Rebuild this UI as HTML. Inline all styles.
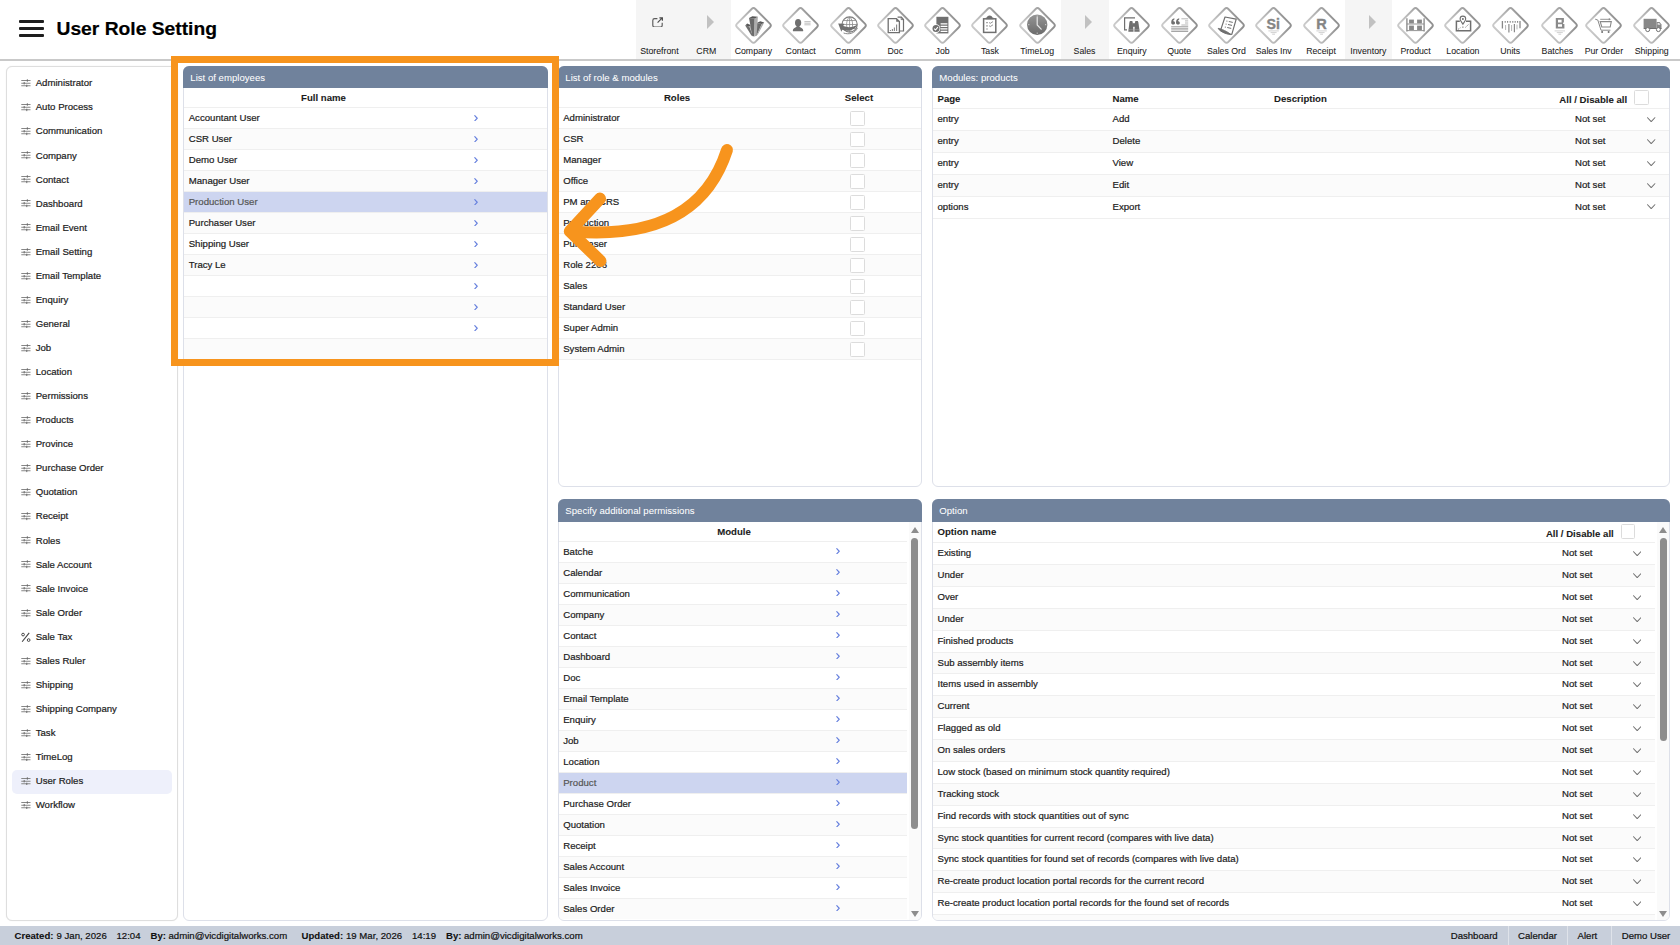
<!DOCTYPE html><html><head><meta charset="utf-8"><title>User Role Setting</title><style>
*{box-sizing:border-box;margin:0;padding:0}
html,body{width:1680px;height:945px;overflow:hidden;background:#fff}
body{font-family:"Liberation Sans",sans-serif;font-size:9.625px;color:#1c1c1c;position:relative;-webkit-text-stroke:0.2px}
.abs{position:absolute}
#hdr{left:0;top:0;width:1680px;height:61px;background:#fff}
#hdrline{left:0;top:59px;width:1680px;height:2px;background:#c9c9c9}
.hb{left:18.7px;width:25px;height:2.6px;background:#1e1e1e;border-radius:1px}
#title{left:56.5px;top:16.9px;font-size:19.25px;font-weight:bold;color:#000;line-height:24px;white-space:nowrap}
.tlab{-webkit-text-stroke:0.05px;width:80px;top:45.8px;text-align:center;font-size:8.75px;line-height:10px;color:#1a1a1a;white-space:nowrap}
.tico{top:6.9px;width:37px;height:37px}
.tri{top:15.3px;width:0;height:0;border-left:7.5px solid #c1c1c1;border-top:7.1px solid transparent;border-bottom:7.1px solid transparent}
#side{left:6px;top:66px;width:172px;height:855px;border:1px solid #dedede;border-radius:6px;background:#fff;box-shadow:0 0 1px #e2e2e2}
.si{left:0;width:171px;height:24px;line-height:24px;white-space:nowrap}
.si svg{position:absolute;left:14px;top:7.8px;width:9.8px;height:8.4px}
.si span{position:absolute;left:28.7px;top:0}
#sel{left:4.6px;top:702.8px;width:160.2px;height:24px;background:#eef0fb;border-radius:5px}
.panel{border:1px solid #dde0e9;border-radius:6px;background:#fff}
.pb{position:absolute;left:0;top:0;right:0;bottom:0;overflow:hidden;border-radius:5px}
.ph{position:absolute;left:-1px;right:-1px;top:-1px;height:22.4px;background:#70829c;color:#fff;line-height:22px;padding-left:7.3px;white-space:nowrap;border-radius:6px 6px 0 0;-webkit-text-stroke:0.04px}
.row{position:absolute;left:0;right:0;border-top:1px solid #efefef;white-space:nowrap}
.row.alt{background:#fbfbfb}
.row.sel{background:#cdd5f0;color:#555}
.row span{position:absolute;top:0}
.b{font-weight:bold;-webkit-text-stroke:0.08px}
.chev{position:absolute;width:4px;height:6.5px}
.cb{position:absolute;width:14.5px;height:14.5px;border:1px solid #dcdcdc;border-radius:1.5px;background:#fff}
.dn{position:absolute;width:8.4px;height:5.6px}
.sbt{position:absolute;background:#fafafa}
.thumb{position:absolute;width:7.6px;background:#8d8d8d;border-radius:4px}
.aup{position:absolute;width:0;height:0;border-left:4px solid transparent;border-right:4px solid transparent;border-bottom:6px solid #8d8d8d}
.adn{position:absolute;width:0;height:0;border-left:4px solid transparent;border-right:4px solid transparent;border-top:6px solid #8d8d8d}
#status{left:0;top:926px;width:1680px;height:19px;background:#c8cfdb;line-height:20px;white-space:nowrap;color:#111}
#status span{position:absolute;top:0}
.sep{position:absolute;top:0;width:1px;height:19px;background:#dfe3ea}
#obox{left:171px;top:56px;width:388px;height:310px;border:7px solid #f7941d}
</style></head><body>
<div id="hdr" class="abs"></div>
<div class="abs hb" style="top:20.1px"></div>
<div class="abs hb" style="top:27.2px"></div>
<div class="abs hb" style="top:34.1px"></div>
<div id="title" class="abs">User Role Setting</div>
<div class="abs" style="left:636.3px;top:0;width:94.4px;height:59px;background:#f5f5f5"></div>
<div class="abs" style="left:1061.1px;top:0;width:47.6px;height:59px;background:#f5f5f5"></div>
<div class="abs" style="left:1344.9px;top:0;width:46.9px;height:59px;background:#f5f5f5"></div>
<svg style="position:absolute;left:651.9px;top:16.6px;width:11.6px;height:10.8px" viewBox="0 0 11.6 10.8"><path d="M5.4 1.6 H2.6 C1.5 1.6 0.8 2.3 0.8 3.4 V8.2 C0.8 9.3 1.5 10 2.6 10 H8.4 C9.5 10 10.2 9.3 10.2 8.2 V5.8" fill="none" stroke="#5a5a5a" stroke-width="1.15"/><path d="M5.6 5.6 L10 1.2 M7.4 0.8 H10.4 V3.8" fill="none" stroke="#4a4a4a" stroke-width="1.15"/></svg>
<div class="abs tlab" style="left:619.40px">Storefront</div>
<div class="abs tri" style="left:707.0px"></div>
<div class="abs tlab" style="left:666.30px">CRM</div>
<svg class="abs tico" style="left:734.90px" viewBox="0 0 37 37"><defs><linearGradient id="dg" x1="0.75" y1="0" x2="0.25" y2="1"><stop offset="0" stop-color="#909090"/><stop offset="0.5" stop-color="#b0b0b0"/><stop offset="1" stop-color="#c9c9c9"/></linearGradient></defs><rect x="-12.9" y="-12.9" width="25.8" height="25.8" rx="2.6" transform="translate(18.5 18.4) rotate(45)" fill="#fff" stroke="url(#dg)" stroke-width="1.9"/><path d="M10.2 18.5 L14.4 19.6 L18 29.3 L16.4 28.6 Z" fill="#6e6e6e"/><path d="M14.4 19.6 L15.6 17.9 L18.4 24 L18 29.3 Z" fill="#b4b4b4"/><path d="M10.2 18.5 L12.2 16.6 L15.6 17.9 L14.4 19.6 Z" fill="#585858"/><path d="M21.6 15.9 L26.8 17.1 L21.6 28.6 L20.2 29.2 Z" fill="#6c6c6c"/><path d="M26.8 17.1 L29.2 15.6 L22.8 27.6 L21.6 28.6 Z" fill="#a6a6a6"/><path d="M21.6 15.9 L25.4 14.2 L29.2 15.6 L26.8 17.1 Z" fill="#585858"/><path d="M14 10.9 L19.7 11.6 L19.4 29.5 L17.3 28.9 Z" fill="#6a6a6a"/><path d="M19.7 11.6 L22.9 9.8 L21.6 28.3 L19.4 29.5 Z" fill="#adadad"/><path d="M14 10.9 L17.4 9.2 L22.9 9.8 L19.7 11.6 Z" fill="#565656"/></svg>
<div class="abs tlab" style="left:713.40px">Company</div>
<svg class="abs tico" style="left:782.20px" viewBox="0 0 37 37"><defs><linearGradient id="dg" x1="0.75" y1="0" x2="0.25" y2="1"><stop offset="0" stop-color="#909090"/><stop offset="0.5" stop-color="#b0b0b0"/><stop offset="1" stop-color="#c9c9c9"/></linearGradient></defs><rect x="-12.9" y="-12.9" width="25.8" height="25.8" rx="2.6" transform="translate(18.5 18.4) rotate(45)" fill="#fff" stroke="url(#dg)" stroke-width="1.9"/><ellipse cx="16.1" cy="15.8" rx="3.1" ry="3.8" fill="#6f6f6f"/><path d="M10.8 24 C10.8 21.4 13 20.6 14.6 19.8 L17.4 19.8 C19 20.6 21.3 21.4 21.3 24 C21.3 24.4 10.8 24.4 10.8 24 Z" fill="#6f6f6f"/><rect x="14.6" y="17.8" width="2.8" height="3" fill="#6f6f6f"/><path d="M22.4 14.6 H28.6 M22.4 16.2 H28.6 M22.4 17.8 H28.6" stroke="#b9b9b9" stroke-width="0.9"/></svg>
<div class="abs tlab" style="left:760.70px">Contact</div>
<svg class="abs tico" style="left:829.50px" viewBox="0 0 37 37"><defs><linearGradient id="dg" x1="0.75" y1="0" x2="0.25" y2="1"><stop offset="0" stop-color="#909090"/><stop offset="0.5" stop-color="#b0b0b0"/><stop offset="1" stop-color="#c9c9c9"/></linearGradient></defs><rect x="-12.9" y="-12.9" width="25.8" height="25.8" rx="2.6" transform="translate(18.5 18.4) rotate(45)" fill="#fff" stroke="url(#dg)" stroke-width="1.9"/><circle cx="19.6" cy="17.5" r="7.6" fill="#fff" stroke="#7c7c7c" stroke-width="1.2"/><path d="M12.2 17.5 H27 M13.6 13.5 H25.6 M13.6 21.5 H25.6 M19.6 10 V25 M19.6 10 C15.6 13 15.6 22 19.6 25 M19.6 10 C23.6 13 23.6 22 19.6 25" fill="none" stroke="#888" stroke-width="0.8"/><path d="M8.2 16.6 L14.4 16.8 L13.3 19 C17.8 20.9 23.2 20.5 27.2 17.6 C26 22.4 19.4 25.2 12.3 22.8 L11.3 24.8 Z" fill="#6f6f6f"/><path d="M13.6 26 C19 28 25.4 26 27.4 21" fill="none" stroke="#888" stroke-width="1"/></svg>
<div class="abs tlab" style="left:808.00px">Comm</div>
<svg class="abs tico" style="left:876.80px" viewBox="0 0 37 37"><defs><linearGradient id="dg" x1="0.75" y1="0" x2="0.25" y2="1"><stop offset="0" stop-color="#909090"/><stop offset="0.5" stop-color="#b0b0b0"/><stop offset="1" stop-color="#c9c9c9"/></linearGradient></defs><rect x="-12.9" y="-12.9" width="25.8" height="25.8" rx="2.6" transform="translate(18.5 18.4) rotate(45)" fill="#fff" stroke="url(#dg)" stroke-width="1.9"/><path d="M20.6 10.2 H24.4 L26.5 12.4 V24 H22.6" fill="#fff" stroke="#6f6f6f" stroke-width="1.2"/><path d="M24.2 10.2 V12.6 H26.5" fill="none" stroke="#6f6f6f" stroke-width="0.9"/><path d="M11.2 11.6 H19.4 L22.4 14.6 V25.6 H11.2 Z" fill="#fff" stroke="#6f6f6f" stroke-width="1.3"/><path d="M19.2 11.6 V14.8 H22.4 Z" fill="#6f6f6f"/><path d="M13.4 24 V23 M15.4 24 V22 M17.4 24 V20.4 M19.6 24 V17.6" stroke="#888" stroke-width="1.1"/></svg>
<div class="abs tlab" style="left:855.30px">Doc</div>
<svg class="abs tico" style="left:924.10px" viewBox="0 0 37 37"><defs><linearGradient id="dg" x1="0.75" y1="0" x2="0.25" y2="1"><stop offset="0" stop-color="#909090"/><stop offset="0.5" stop-color="#b0b0b0"/><stop offset="1" stop-color="#c9c9c9"/></linearGradient></defs><rect x="-12.9" y="-12.9" width="25.8" height="25.8" rx="2.6" transform="translate(18.5 18.4) rotate(45)" fill="#fff" stroke="url(#dg)" stroke-width="1.9"/><rect x="12.4" y="9.8" width="12" height="16.6" fill="#6f6f6f"/><path d="M16.6 16.8 H23.4 M16.6 19.3 H23.4 M16.6 21.8 H23.4 M16.6 24.3 H23.4" stroke="#fff" stroke-width="1.3"/><circle cx="12" cy="21.6" r="4.3" fill="#fff"/><circle cx="12" cy="21.6" r="3.5" fill="#6f6f6f"/><path d="M10.2 21.7 L11.5 23 L13.9 20.2" fill="none" stroke="#fff" stroke-width="1.1"/></svg>
<div class="abs tlab" style="left:902.60px">Job</div>
<svg class="abs tico" style="left:971.40px" viewBox="0 0 37 37"><defs><linearGradient id="dg" x1="0.75" y1="0" x2="0.25" y2="1"><stop offset="0" stop-color="#909090"/><stop offset="0.5" stop-color="#b0b0b0"/><stop offset="1" stop-color="#c9c9c9"/></linearGradient></defs><rect x="-12.9" y="-12.9" width="25.8" height="25.8" rx="2.6" transform="translate(18.5 18.4) rotate(45)" fill="#fff" stroke="url(#dg)" stroke-width="1.9"/><rect x="12.6" y="11.8" width="12.2" height="13.6" fill="#fff" stroke="#6f6f6f" stroke-width="1.5"/><path d="M15.6 11.6 C15.6 7.6 21.6 7.6 21.6 11.6 Z" fill="#6f6f6f"/><rect x="14.8" y="10.6" width="7.6" height="1.6" fill="#6f6f6f"/><path d="M15.4 15.6 H16.6 M15.4 18.8 H16.6 M15.4 22 H16.6" stroke="#6f6f6f" stroke-width="1.2"/><path d="M18 15.4 L19.2 16.4 L22 14.6 M18 18.6 L19.2 19.6 L22 17.8" fill="none" stroke="#888" stroke-width="0.9"/></svg>
<div class="abs tlab" style="left:949.90px">Task</div>
<svg class="abs tico" style="left:1018.70px" viewBox="0 0 37 37"><defs><linearGradient id="dg" x1="0.75" y1="0" x2="0.25" y2="1"><stop offset="0" stop-color="#909090"/><stop offset="0.5" stop-color="#b0b0b0"/><stop offset="1" stop-color="#c9c9c9"/></linearGradient></defs><rect x="-12.9" y="-12.9" width="25.8" height="25.8" rx="2.6" transform="translate(18.5 18.4) rotate(45)" fill="#fff" stroke="url(#dg)" stroke-width="1.9"/><defs><linearGradient id="cg" x1="0" y1="0" x2="0" y2="1"><stop offset="0" stop-color="#969696"/><stop offset="1" stop-color="#6a6a6a"/></linearGradient></defs><circle cx="18.2" cy="17.7" r="10.2" fill="url(#cg)"/><path d="M18.2 10.4 V17.9 L22.2 22.2" fill="none" stroke="#e8e8e8" stroke-width="1.2" stroke-linecap="round"/><path d="M18.2 8.6 V9.8 M18.2 25.6 V26.8 M9.2 17.7 H10.4 M26 17.7 H27.2" stroke="#e0e0e0" stroke-width="0.9"/></svg>
<div class="abs tlab" style="left:997.20px">TimeLog</div>
<div class="abs tri" style="left:1085.0px"></div>
<div class="abs tlab" style="left:1044.50px">Sales</div>
<svg class="abs tico" style="left:1113.30px" viewBox="0 0 37 37"><defs><linearGradient id="dg" x1="0.75" y1="0" x2="0.25" y2="1"><stop offset="0" stop-color="#909090"/><stop offset="0.5" stop-color="#b0b0b0"/><stop offset="1" stop-color="#c9c9c9"/></linearGradient></defs><rect x="-12.9" y="-12.9" width="25.8" height="25.8" rx="2.6" transform="translate(18.5 18.4) rotate(45)" fill="#fff" stroke="url(#dg)" stroke-width="1.9"/><path d="M22 10.9 H11.6 V22.9 H14" fill="none" stroke="#6f6f6f" stroke-width="1.2"/><path d="M16.9 14 H19.3 L19.7 15.6 L20.6 24.8 H15.3 L16.4 15.6 Z" fill="#6f6f6f"/><path d="M22.4 14 H24.8 L25.4 15.6 L26.7 24.8 H21.3 L22 15.6 Z" fill="#6f6f6f"/><rect x="19.4" y="16.2" width="3" height="3.6" fill="#6f6f6f"/><path d="M15.6 22.7 H20.4 M21.5 22.7 H26.4" stroke="#a2a2a2" stroke-width="0.6"/></svg>
<div class="abs tlab" style="left:1091.80px">Enquiry</div>
<svg class="abs tico" style="left:1160.60px" viewBox="0 0 37 37"><defs><linearGradient id="dg" x1="0.75" y1="0" x2="0.25" y2="1"><stop offset="0" stop-color="#909090"/><stop offset="0.5" stop-color="#b0b0b0"/><stop offset="1" stop-color="#c9c9c9"/></linearGradient></defs><rect x="-12.9" y="-12.9" width="25.8" height="25.8" rx="2.6" transform="translate(18.5 18.4) rotate(45)" fill="#fff" stroke="url(#dg)" stroke-width="1.9"/><path d="M10.2 15.4 C10.2 12.8 11.4 11.6 13.4 11.2 L13.4 12.4 C12.6 12.8 12.2 13.4 12.2 14.2 C13.4 14.2 14 14.9 14 15.9 C14 17 13.2 17.6 12.2 17.6 C11 17.6 10.2 16.8 10.2 15.4 Z" fill="#6f6f6f"/><path d="M15 15.4 C15 12.8 16.2 11.6 18.2 11.2 L18.2 12.4 C17.4 12.8 17 13.4 17 14.2 C18.2 14.2 18.8 14.9 18.8 15.9 C18.8 17 18 17.6 17 17.6 C15.8 17.6 15 16.8 15 15.4 Z" fill="#6f6f6f"/><path d="M20.4 11.8 H27.2 M24 13.9 H27.2 M24 16 H27.2 M20.4 18 H27.2" stroke="#a5a5a5" stroke-width="0.8"/><path d="M10.2 19.7 H27.2 M10.2 21.3 H27.2 M10.2 22.9 H27.2 M10.2 24.5 H27.2" stroke="#8f8f8f" stroke-width="0.8"/></svg>
<div class="abs tlab" style="left:1139.10px">Quote</div>
<svg class="abs tico" style="left:1207.90px" viewBox="0 0 37 37"><defs><linearGradient id="dg" x1="0.75" y1="0" x2="0.25" y2="1"><stop offset="0" stop-color="#909090"/><stop offset="0.5" stop-color="#b0b0b0"/><stop offset="1" stop-color="#c9c9c9"/></linearGradient></defs><rect x="-12.9" y="-12.9" width="25.8" height="25.8" rx="2.6" transform="translate(18.5 18.4) rotate(45)" fill="#fff" stroke="url(#dg)" stroke-width="1.9"/><path d="M17 10 L28.2 12.2 L23.8 27.4 C21.6 27.4 13.6 23.4 12.8 22.6 Z" fill="#fff" stroke="#6f6f6f" stroke-width="1.2" stroke-linejoin="round"/><path d="M10.2 21.4 C12.4 21.4 20.4 25 22.8 27.6 C21 27.6 12.4 25.6 10.2 21.4 Z" fill="#6f6f6f" stroke="#6f6f6f" stroke-width="1"/><path d="M18.4 14 L19.4 14.2 M17.6 17 L18.6 17.2 M16.8 20 L17.8 20.2" stroke="#6f6f6f" stroke-width="1.1"/><path d="M20.8 14.5 L24.8 15.4 M20 17.5 L24 18.4 M19.2 20.5 L23.2 21.4" stroke="#6f6f6f" stroke-width="1"/></svg>
<div class="abs tlab" style="left:1186.40px">Sales Ord</div>
<svg class="abs tico" style="left:1255.20px" viewBox="0 0 37 37"><defs><linearGradient id="dg" x1="0.75" y1="0" x2="0.25" y2="1"><stop offset="0" stop-color="#909090"/><stop offset="0.5" stop-color="#b0b0b0"/><stop offset="1" stop-color="#c9c9c9"/></linearGradient></defs><rect x="-12.9" y="-12.9" width="25.8" height="25.8" rx="2.6" transform="translate(18.5 18.4) rotate(45)" fill="#fff" stroke="url(#dg)" stroke-width="1.9"/><text x="18.3" y="21.7" font-family="Liberation Sans, sans-serif" font-weight="bold" font-size="14.2" fill="#858585" stroke="#858585" stroke-width="0.35" text-anchor="middle">Si</text><path d="M13.4 23.9 H23.8 M15.6 25.6 H21.6 M17.2 27.2 H20" stroke="#c4c4c4" stroke-width="0.8"/></svg>
<div class="abs tlab" style="left:1233.70px">Sales Inv</div>
<svg class="abs tico" style="left:1302.50px" viewBox="0 0 37 37"><defs><linearGradient id="dg" x1="0.75" y1="0" x2="0.25" y2="1"><stop offset="0" stop-color="#909090"/><stop offset="0.5" stop-color="#b0b0b0"/><stop offset="1" stop-color="#c9c9c9"/></linearGradient></defs><rect x="-12.9" y="-12.9" width="25.8" height="25.8" rx="2.6" transform="translate(18.5 18.4) rotate(45)" fill="#fff" stroke="url(#dg)" stroke-width="1.9"/><text x="18.6" y="21.7" font-family="Liberation Sans, sans-serif" font-weight="bold" font-size="14.6" fill="#858585" stroke="#858585" stroke-width="0.35" text-anchor="middle">R</text><path d="M13.4 23.9 H23.8 M15.6 25.6 H21.6 M17.2 27.2 H20" stroke="#c4c4c4" stroke-width="0.8"/></svg>
<div class="abs tlab" style="left:1281.00px">Receipt</div>
<div class="abs tri" style="left:1368.6px"></div>
<div class="abs tlab" style="left:1328.30px">Inventory</div>
<svg class="abs tico" style="left:1397.10px" viewBox="0 0 37 37"><defs><linearGradient id="dg" x1="0.75" y1="0" x2="0.25" y2="1"><stop offset="0" stop-color="#909090"/><stop offset="0.5" stop-color="#b0b0b0"/><stop offset="1" stop-color="#c9c9c9"/></linearGradient></defs><rect x="-12.9" y="-12.9" width="25.8" height="25.8" rx="2.6" transform="translate(18.5 18.4) rotate(45)" fill="#fff" stroke="url(#dg)" stroke-width="1.9"/><path d="M9.9 11.3 V24.4 M27.1 11.3 V24.4" stroke="#888" stroke-width="1.3"/><path d="M9.9 17 H27.1 M9.9 23.6 H27.1" stroke="#888" stroke-width="0.9"/><rect x="12.1" y="12.6" width="4.8" height="3.8" fill="#888"/><rect x="20.1" y="12.6" width="4.8" height="3.8" fill="#888"/><rect x="12.1" y="18.6" width="4.8" height="4.4" fill="#888"/><rect x="20.1" y="18.6" width="4.8" height="4.4" fill="#888"/></svg>
<div class="abs tlab" style="left:1375.60px">Product</div>
<svg class="abs tico" style="left:1444.40px" viewBox="0 0 37 37"><defs><linearGradient id="dg" x1="0.75" y1="0" x2="0.25" y2="1"><stop offset="0" stop-color="#909090"/><stop offset="0.5" stop-color="#b0b0b0"/><stop offset="1" stop-color="#c9c9c9"/></linearGradient></defs><rect x="-12.9" y="-12.9" width="25.8" height="25.8" rx="2.6" transform="translate(18.5 18.4) rotate(45)" fill="#fff" stroke="url(#dg)" stroke-width="1.9"/><path d="M15.8 14.2 H12.4 V23.8 H26.6 V14.2 H22" fill="none" stroke="#6f6f6f" stroke-width="1.5"/><path d="M18.9 17.2 C17.6 15 16.1 13.6 16.1 11.9 C16.1 10.3 17.3 9.1 18.9 9.1 C20.5 9.1 21.7 10.3 21.7 11.9 C21.7 13.6 20.2 15 18.9 17.2 Z" fill="#fff" stroke="#6f6f6f" stroke-width="1.1"/><circle cx="18.9" cy="11.9" r="1" fill="#6f6f6f"/><path d="M14 22.4 L16.6 20.6 M21.4 20.4 L24.8 17.2 M18.9 19.4 V22" stroke="#6f6f6f" stroke-width="0.8" stroke-dasharray="1.6 1"/></svg>
<div class="abs tlab" style="left:1422.90px">Location</div>
<svg class="abs tico" style="left:1491.70px" viewBox="0 0 37 37"><defs><linearGradient id="dg" x1="0.75" y1="0" x2="0.25" y2="1"><stop offset="0" stop-color="#909090"/><stop offset="0.5" stop-color="#b0b0b0"/><stop offset="1" stop-color="#c9c9c9"/></linearGradient></defs><rect x="-12.9" y="-12.9" width="25.8" height="25.8" rx="2.6" transform="translate(18.5 18.4) rotate(45)" fill="#fff" stroke="url(#dg)" stroke-width="1.9"/><path d="M10.4 14 V21.6 M28 14 V21.2" stroke="#888" stroke-width="1.3"/><path d="M13.2 14 V15.8 M15.6 14 V15.8 M18.2 14 V15.8 M20.8 14 V15.8 M23.2 14 V15.8 M25.6 14 V15.8" stroke="#888" stroke-width="1.1"/><path d="M16.9 17 V25.6 M22.4 17 V25.2" stroke="#888" stroke-width="1.2"/><path d="M13.6 18 V23 M19.6 18 V24 M25 17.6 V22.4" stroke="#b5b5b5" stroke-width="1"/></svg>
<div class="abs tlab" style="left:1470.20px">Units</div>
<svg class="abs tico" style="left:1541.00px" viewBox="0 0 37 37"><defs><linearGradient id="dg" x1="0.75" y1="0" x2="0.25" y2="1"><stop offset="0" stop-color="#909090"/><stop offset="0.5" stop-color="#b0b0b0"/><stop offset="1" stop-color="#c9c9c9"/></linearGradient></defs><rect x="-12.9" y="-12.9" width="25.8" height="25.8" rx="2.6" transform="translate(18.5 18.4) rotate(45)" fill="#fff" stroke="url(#dg)" stroke-width="1.9"/><path d="M14.8 11 H22.9 V15.5 H22.1 V16.9 H23.4 V21.6 H14.8 Z M17 12.8 V15.4 H20.6 V12.8 Z M17 17.2 V19.8 H21 V17.2 Z" fill="#8a8a8a" fill-rule="evenodd"/><path d="M13.6 23.9 H24 M15.8 25.6 H21.8 M17.4 27.2 H20.2" stroke="#c4c4c4" stroke-width="0.8"/></svg>
<div class="abs tlab" style="left:1517.40px">Batches</div>
<svg class="abs tico" style="left:1585.40px" viewBox="0 0 37 37"><defs><linearGradient id="dg" x1="0.75" y1="0" x2="0.25" y2="1"><stop offset="0" stop-color="#909090"/><stop offset="0.5" stop-color="#b0b0b0"/><stop offset="1" stop-color="#c9c9c9"/></linearGradient></defs><rect x="-12.9" y="-12.9" width="25.8" height="25.8" rx="2.6" transform="translate(18.5 18.4) rotate(45)" fill="#fff" stroke="url(#dg)" stroke-width="1.9"/><path d="M10.2 12.2 L12.8 13 L16 23.2 H25.4" fill="none" stroke="#888" stroke-width="1"/><path d="M15.2 14.6 H26.3 L25.2 20 H16.8 Z" fill="none" stroke="#888" stroke-width="1.1"/><path d="M15.2 12.3 H24.6" stroke="#888" stroke-width="0.9"/><path d="M23.8 11 L26 12.3 L23.8 13.6 Z" fill="#888"/><circle cx="17.1" cy="25" r="1" fill="#6f6f6f"/><circle cx="23.6" cy="25" r="1" fill="#6f6f6f"/></svg>
<div class="abs tlab" style="left:1563.90px">Pur Order</div>
<svg class="abs tico" style="left:1633.20px" viewBox="0 0 37 37"><defs><linearGradient id="dg" x1="0.75" y1="0" x2="0.25" y2="1"><stop offset="0" stop-color="#909090"/><stop offset="0.5" stop-color="#b0b0b0"/><stop offset="1" stop-color="#c9c9c9"/></linearGradient></defs><rect x="-12.9" y="-12.9" width="25.8" height="25.8" rx="2.6" transform="translate(18.5 18.4) rotate(45)" fill="#fff" stroke="url(#dg)" stroke-width="1.9"/><rect x="10.6" y="11.8" width="13" height="9.2" fill="#888"/><path d="M23.6 15 H26.6 L28.5 17.6 V21.8 H23.6 Z" fill="#888"/><path d="M24.6 15.9 H26.2 L27.5 17.8 H24.6 Z" fill="#e6e6e6"/><rect x="10.6" y="21" width="17.9" height="1" fill="#6f6f6f"/><circle cx="14.7" cy="22.6" r="2" fill="#fff" stroke="#6f6f6f" stroke-width="1"/><circle cx="25.4" cy="22.6" r="2" fill="#fff" stroke="#6f6f6f" stroke-width="1"/></svg>
<div class="abs tlab" style="left:1611.70px">Shipping</div>
<div id="hdrline" class="abs"></div>
<div id="side" class="abs">
<div id="sel" class="abs"></div>
<div class="abs si" style="top:4.30px"><svg viewBox="0 0 10.5 9"><path d="M0.3 1.7 H10.2 M0.3 4.5 H10.2 M0.3 7.3 H10.2" stroke="#868686" stroke-width="1.1"/><path d="M6.8 0.3 V2.9 M3.4 3.2 V5.8 M6.2 6.1 V8.7" stroke="#666" stroke-width="1"/></svg><span>Administrator</span></div>
<div class="abs si" style="top:28.36px"><svg viewBox="0 0 10.5 9"><path d="M0.3 1.7 H10.2 M0.3 4.5 H10.2 M0.3 7.3 H10.2" stroke="#868686" stroke-width="1.1"/><path d="M6.8 0.3 V2.9 M3.4 3.2 V5.8 M6.2 6.1 V8.7" stroke="#666" stroke-width="1"/></svg><span>Auto Process</span></div>
<div class="abs si" style="top:52.43px"><svg viewBox="0 0 10.5 9"><path d="M0.3 1.7 H10.2 M0.3 4.5 H10.2 M0.3 7.3 H10.2" stroke="#868686" stroke-width="1.1"/><path d="M6.8 0.3 V2.9 M3.4 3.2 V5.8 M6.2 6.1 V8.7" stroke="#666" stroke-width="1"/></svg><span>Communication</span></div>
<div class="abs si" style="top:76.50px"><svg viewBox="0 0 10.5 9"><path d="M0.3 1.7 H10.2 M0.3 4.5 H10.2 M0.3 7.3 H10.2" stroke="#868686" stroke-width="1.1"/><path d="M6.8 0.3 V2.9 M3.4 3.2 V5.8 M6.2 6.1 V8.7" stroke="#666" stroke-width="1"/></svg><span>Company</span></div>
<div class="abs si" style="top:100.56px"><svg viewBox="0 0 10.5 9"><path d="M0.3 1.7 H10.2 M0.3 4.5 H10.2 M0.3 7.3 H10.2" stroke="#868686" stroke-width="1.1"/><path d="M6.8 0.3 V2.9 M3.4 3.2 V5.8 M6.2 6.1 V8.7" stroke="#666" stroke-width="1"/></svg><span>Contact</span></div>
<div class="abs si" style="top:124.62px"><svg viewBox="0 0 10.5 9"><path d="M0.3 1.7 H10.2 M0.3 4.5 H10.2 M0.3 7.3 H10.2" stroke="#868686" stroke-width="1.1"/><path d="M6.8 0.3 V2.9 M3.4 3.2 V5.8 M6.2 6.1 V8.7" stroke="#666" stroke-width="1"/></svg><span>Dashboard</span></div>
<div class="abs si" style="top:148.69px"><svg viewBox="0 0 10.5 9"><path d="M0.3 1.7 H10.2 M0.3 4.5 H10.2 M0.3 7.3 H10.2" stroke="#868686" stroke-width="1.1"/><path d="M6.8 0.3 V2.9 M3.4 3.2 V5.8 M6.2 6.1 V8.7" stroke="#666" stroke-width="1"/></svg><span>Email Event</span></div>
<div class="abs si" style="top:172.75px"><svg viewBox="0 0 10.5 9"><path d="M0.3 1.7 H10.2 M0.3 4.5 H10.2 M0.3 7.3 H10.2" stroke="#868686" stroke-width="1.1"/><path d="M6.8 0.3 V2.9 M3.4 3.2 V5.8 M6.2 6.1 V8.7" stroke="#666" stroke-width="1"/></svg><span>Email Setting</span></div>
<div class="abs si" style="top:196.82px"><svg viewBox="0 0 10.5 9"><path d="M0.3 1.7 H10.2 M0.3 4.5 H10.2 M0.3 7.3 H10.2" stroke="#868686" stroke-width="1.1"/><path d="M6.8 0.3 V2.9 M3.4 3.2 V5.8 M6.2 6.1 V8.7" stroke="#666" stroke-width="1"/></svg><span>Email Template</span></div>
<div class="abs si" style="top:220.88px"><svg viewBox="0 0 10.5 9"><path d="M0.3 1.7 H10.2 M0.3 4.5 H10.2 M0.3 7.3 H10.2" stroke="#868686" stroke-width="1.1"/><path d="M6.8 0.3 V2.9 M3.4 3.2 V5.8 M6.2 6.1 V8.7" stroke="#666" stroke-width="1"/></svg><span>Enquiry</span></div>
<div class="abs si" style="top:244.95px"><svg viewBox="0 0 10.5 9"><path d="M0.3 1.7 H10.2 M0.3 4.5 H10.2 M0.3 7.3 H10.2" stroke="#868686" stroke-width="1.1"/><path d="M6.8 0.3 V2.9 M3.4 3.2 V5.8 M6.2 6.1 V8.7" stroke="#666" stroke-width="1"/></svg><span>General</span></div>
<div class="abs si" style="top:269.02px"><svg viewBox="0 0 10.5 9"><path d="M0.3 1.7 H10.2 M0.3 4.5 H10.2 M0.3 7.3 H10.2" stroke="#868686" stroke-width="1.1"/><path d="M6.8 0.3 V2.9 M3.4 3.2 V5.8 M6.2 6.1 V8.7" stroke="#666" stroke-width="1"/></svg><span>Job</span></div>
<div class="abs si" style="top:293.08px"><svg viewBox="0 0 10.5 9"><path d="M0.3 1.7 H10.2 M0.3 4.5 H10.2 M0.3 7.3 H10.2" stroke="#868686" stroke-width="1.1"/><path d="M6.8 0.3 V2.9 M3.4 3.2 V5.8 M6.2 6.1 V8.7" stroke="#666" stroke-width="1"/></svg><span>Location</span></div>
<div class="abs si" style="top:317.15px"><svg viewBox="0 0 10.5 9"><path d="M0.3 1.7 H10.2 M0.3 4.5 H10.2 M0.3 7.3 H10.2" stroke="#868686" stroke-width="1.1"/><path d="M6.8 0.3 V2.9 M3.4 3.2 V5.8 M6.2 6.1 V8.7" stroke="#666" stroke-width="1"/></svg><span>Permissions</span></div>
<div class="abs si" style="top:341.21px"><svg viewBox="0 0 10.5 9"><path d="M0.3 1.7 H10.2 M0.3 4.5 H10.2 M0.3 7.3 H10.2" stroke="#868686" stroke-width="1.1"/><path d="M6.8 0.3 V2.9 M3.4 3.2 V5.8 M6.2 6.1 V8.7" stroke="#666" stroke-width="1"/></svg><span>Products</span></div>
<div class="abs si" style="top:365.28px"><svg viewBox="0 0 10.5 9"><path d="M0.3 1.7 H10.2 M0.3 4.5 H10.2 M0.3 7.3 H10.2" stroke="#868686" stroke-width="1.1"/><path d="M6.8 0.3 V2.9 M3.4 3.2 V5.8 M6.2 6.1 V8.7" stroke="#666" stroke-width="1"/></svg><span>Province</span></div>
<div class="abs si" style="top:389.34px"><svg viewBox="0 0 10.5 9"><path d="M0.3 1.7 H10.2 M0.3 4.5 H10.2 M0.3 7.3 H10.2" stroke="#868686" stroke-width="1.1"/><path d="M6.8 0.3 V2.9 M3.4 3.2 V5.8 M6.2 6.1 V8.7" stroke="#666" stroke-width="1"/></svg><span>Purchase Order</span></div>
<div class="abs si" style="top:413.41px"><svg viewBox="0 0 10.5 9"><path d="M0.3 1.7 H10.2 M0.3 4.5 H10.2 M0.3 7.3 H10.2" stroke="#868686" stroke-width="1.1"/><path d="M6.8 0.3 V2.9 M3.4 3.2 V5.8 M6.2 6.1 V8.7" stroke="#666" stroke-width="1"/></svg><span>Quotation</span></div>
<div class="abs si" style="top:437.47px"><svg viewBox="0 0 10.5 9"><path d="M0.3 1.7 H10.2 M0.3 4.5 H10.2 M0.3 7.3 H10.2" stroke="#868686" stroke-width="1.1"/><path d="M6.8 0.3 V2.9 M3.4 3.2 V5.8 M6.2 6.1 V8.7" stroke="#666" stroke-width="1"/></svg><span>Receipt</span></div>
<div class="abs si" style="top:461.53px"><svg viewBox="0 0 10.5 9"><path d="M0.3 1.7 H10.2 M0.3 4.5 H10.2 M0.3 7.3 H10.2" stroke="#868686" stroke-width="1.1"/><path d="M6.8 0.3 V2.9 M3.4 3.2 V5.8 M6.2 6.1 V8.7" stroke="#666" stroke-width="1"/></svg><span>Roles</span></div>
<div class="abs si" style="top:485.60px"><svg viewBox="0 0 10.5 9"><path d="M0.3 1.7 H10.2 M0.3 4.5 H10.2 M0.3 7.3 H10.2" stroke="#868686" stroke-width="1.1"/><path d="M6.8 0.3 V2.9 M3.4 3.2 V5.8 M6.2 6.1 V8.7" stroke="#666" stroke-width="1"/></svg><span>Sale Account</span></div>
<div class="abs si" style="top:509.66px"><svg viewBox="0 0 10.5 9"><path d="M0.3 1.7 H10.2 M0.3 4.5 H10.2 M0.3 7.3 H10.2" stroke="#868686" stroke-width="1.1"/><path d="M6.8 0.3 V2.9 M3.4 3.2 V5.8 M6.2 6.1 V8.7" stroke="#666" stroke-width="1"/></svg><span>Sale Invoice</span></div>
<div class="abs si" style="top:533.73px"><svg viewBox="0 0 10.5 9"><path d="M0.3 1.7 H10.2 M0.3 4.5 H10.2 M0.3 7.3 H10.2" stroke="#868686" stroke-width="1.1"/><path d="M6.8 0.3 V2.9 M3.4 3.2 V5.8 M6.2 6.1 V8.7" stroke="#666" stroke-width="1"/></svg><span>Sale Order</span></div>
<div class="abs si" style="top:557.79px"><svg viewBox="0 0 10.5 9" style="overflow:visible"><path d="M1.2 9.4 L8.8 -0.2" stroke="#444" stroke-width="1.2"/><circle cx="2.2" cy="1.7" r="1.45" fill="none" stroke="#444" stroke-width="1.05"/><circle cx="8.2" cy="7.6" r="1.45" fill="none" stroke="#444" stroke-width="1.05"/></svg><span>Sale Tax</span></div>
<div class="abs si" style="top:581.86px"><svg viewBox="0 0 10.5 9"><path d="M0.3 1.7 H10.2 M0.3 4.5 H10.2 M0.3 7.3 H10.2" stroke="#868686" stroke-width="1.1"/><path d="M6.8 0.3 V2.9 M3.4 3.2 V5.8 M6.2 6.1 V8.7" stroke="#666" stroke-width="1"/></svg><span>Sales Ruler</span></div>
<div class="abs si" style="top:605.92px"><svg viewBox="0 0 10.5 9"><path d="M0.3 1.7 H10.2 M0.3 4.5 H10.2 M0.3 7.3 H10.2" stroke="#868686" stroke-width="1.1"/><path d="M6.8 0.3 V2.9 M3.4 3.2 V5.8 M6.2 6.1 V8.7" stroke="#666" stroke-width="1"/></svg><span>Shipping</span></div>
<div class="abs si" style="top:629.99px"><svg viewBox="0 0 10.5 9"><path d="M0.3 1.7 H10.2 M0.3 4.5 H10.2 M0.3 7.3 H10.2" stroke="#868686" stroke-width="1.1"/><path d="M6.8 0.3 V2.9 M3.4 3.2 V5.8 M6.2 6.1 V8.7" stroke="#666" stroke-width="1"/></svg><span>Shipping Company</span></div>
<div class="abs si" style="top:654.05px"><svg viewBox="0 0 10.5 9"><path d="M0.3 1.7 H10.2 M0.3 4.5 H10.2 M0.3 7.3 H10.2" stroke="#868686" stroke-width="1.1"/><path d="M6.8 0.3 V2.9 M3.4 3.2 V5.8 M6.2 6.1 V8.7" stroke="#666" stroke-width="1"/></svg><span>Task</span></div>
<div class="abs si" style="top:678.12px"><svg viewBox="0 0 10.5 9"><path d="M0.3 1.7 H10.2 M0.3 4.5 H10.2 M0.3 7.3 H10.2" stroke="#868686" stroke-width="1.1"/><path d="M6.8 0.3 V2.9 M3.4 3.2 V5.8 M6.2 6.1 V8.7" stroke="#666" stroke-width="1"/></svg><span>TimeLog</span></div>
<div class="abs si" style="top:702.18px"><svg viewBox="0 0 10.5 9"><path d="M0.3 1.7 H10.2 M0.3 4.5 H10.2 M0.3 7.3 H10.2" stroke="#868686" stroke-width="1.1"/><path d="M6.8 0.3 V2.9 M3.4 3.2 V5.8 M6.2 6.1 V8.7" stroke="#666" stroke-width="1"/></svg><span>User Roles</span></div>
<div class="abs si" style="top:726.25px"><svg viewBox="0 0 10.5 9"><path d="M0.3 1.7 H10.2 M0.3 4.5 H10.2 M0.3 7.3 H10.2" stroke="#868686" stroke-width="1.1"/><path d="M6.8 0.3 V2.9 M3.4 3.2 V5.8 M6.2 6.1 V8.7" stroke="#666" stroke-width="1"/></svg><span>Workflow</span></div>
</div>
<div class="abs panel" style="left:183px;top:66px;width:365px;height:855px"><div class="pb">
<div class="row b" style="top:21px;height:20px;line-height:20.5px;border-top:none"><span style="left:0;width:279px;text-align:center">Full name</span></div>
<div class="row" style="top:40px;height:21px;line-height:19.4px">
<span style="left:4.7px">Accountant User</span>
<svg class="chev" style="left:290.2px;top:6.9px" viewBox="0 0 5 8"><path d="M1 0.8 L4 4 L1 7.2" fill="none" stroke="#6781de" stroke-width="1.45" stroke-linecap="round" stroke-linejoin="round"/></svg>
</div>
<div class="row alt" style="top:61px;height:21px;line-height:19.4px">
<span style="left:4.7px">CSR User</span>
<svg class="chev" style="left:290.2px;top:6.9px" viewBox="0 0 5 8"><path d="M1 0.8 L4 4 L1 7.2" fill="none" stroke="#6781de" stroke-width="1.45" stroke-linecap="round" stroke-linejoin="round"/></svg>
</div>
<div class="row" style="top:82px;height:21px;line-height:19.4px">
<span style="left:4.7px">Demo User</span>
<svg class="chev" style="left:290.2px;top:6.9px" viewBox="0 0 5 8"><path d="M1 0.8 L4 4 L1 7.2" fill="none" stroke="#6781de" stroke-width="1.45" stroke-linecap="round" stroke-linejoin="round"/></svg>
</div>
<div class="row alt" style="top:103px;height:21px;line-height:19.4px">
<span style="left:4.7px">Manager User</span>
<svg class="chev" style="left:290.2px;top:6.9px" viewBox="0 0 5 8"><path d="M1 0.8 L4 4 L1 7.2" fill="none" stroke="#6781de" stroke-width="1.45" stroke-linecap="round" stroke-linejoin="round"/></svg>
</div>
<div class="row sel" style="top:124px;height:21px;line-height:19.4px">
<span style="left:4.7px">Production User</span>
<svg class="chev" style="left:290.2px;top:6.9px" viewBox="0 0 5 8"><path d="M1 0.8 L4 4 L1 7.2" fill="none" stroke="#6781de" stroke-width="1.45" stroke-linecap="round" stroke-linejoin="round"/></svg>
</div>
<div class="row alt" style="top:145px;height:21px;line-height:19.4px">
<span style="left:4.7px">Purchaser User</span>
<svg class="chev" style="left:290.2px;top:6.9px" viewBox="0 0 5 8"><path d="M1 0.8 L4 4 L1 7.2" fill="none" stroke="#6781de" stroke-width="1.45" stroke-linecap="round" stroke-linejoin="round"/></svg>
</div>
<div class="row" style="top:166px;height:21px;line-height:19.4px">
<span style="left:4.7px">Shipping User</span>
<svg class="chev" style="left:290.2px;top:6.9px" viewBox="0 0 5 8"><path d="M1 0.8 L4 4 L1 7.2" fill="none" stroke="#6781de" stroke-width="1.45" stroke-linecap="round" stroke-linejoin="round"/></svg>
</div>
<div class="row alt" style="top:187px;height:21px;line-height:19.4px">
<span style="left:4.7px">Tracy Le</span>
<svg class="chev" style="left:290.2px;top:6.9px" viewBox="0 0 5 8"><path d="M1 0.8 L4 4 L1 7.2" fill="none" stroke="#6781de" stroke-width="1.45" stroke-linecap="round" stroke-linejoin="round"/></svg>
</div>
<div class="row" style="top:208px;height:21px;line-height:19.4px">
<svg class="chev" style="left:290.2px;top:6.9px" viewBox="0 0 5 8"><path d="M1 0.8 L4 4 L1 7.2" fill="none" stroke="#6781de" stroke-width="1.45" stroke-linecap="round" stroke-linejoin="round"/></svg>
</div>
<div class="row alt" style="top:229px;height:21px;line-height:19.4px">
<svg class="chev" style="left:290.2px;top:6.9px" viewBox="0 0 5 8"><path d="M1 0.8 L4 4 L1 7.2" fill="none" stroke="#6781de" stroke-width="1.45" stroke-linecap="round" stroke-linejoin="round"/></svg>
</div>
<div class="row" style="top:250px;height:21px;line-height:19.4px">
<svg class="chev" style="left:290.2px;top:6.9px" viewBox="0 0 5 8"><path d="M1 0.8 L4 4 L1 7.2" fill="none" stroke="#6781de" stroke-width="1.45" stroke-linecap="round" stroke-linejoin="round"/></svg>
</div>
<div class="row alt" style="top:271px;height:21px;line-height:19.4px">
</div>
<div class="row" style="top:292px;height:1px"></div>
</div><div class="ph" style="height:22.4px;line-height:23.0px">List of employees</div></div>
<div class="abs panel" style="left:558px;top:66px;width:364px;height:421px"><div class="pb">
<div class="row b" style="top:21px;height:20px;line-height:20.5px;border-top:none"><span style="left:0;width:236px;text-align:center">Roles</span><span style="left:270px;width:60px;text-align:center">Select</span></div>
<div class="row" style="top:40px;height:21px;line-height:19.4px"><span style="left:4.2px">Administrator</span><div class="cb" style="left:291px;top:3.2px;width:15.4px;height:15px"></div></div>
<div class="row alt" style="top:61px;height:21px;line-height:19.4px"><span style="left:4.2px">CSR</span><div class="cb" style="left:291px;top:3.2px;width:15.4px;height:15px"></div></div>
<div class="row" style="top:82px;height:21px;line-height:19.4px"><span style="left:4.2px">Manager</span><div class="cb" style="left:291px;top:3.2px;width:15.4px;height:15px"></div></div>
<div class="row alt" style="top:103px;height:21px;line-height:19.4px"><span style="left:4.2px">Office</span><div class="cb" style="left:291px;top:3.2px;width:15.4px;height:15px"></div></div>
<div class="row" style="top:124px;height:21px;line-height:19.4px"><span style="left:4.2px">PM and CRS</span><div class="cb" style="left:291px;top:3.2px;width:15.4px;height:15px"></div></div>
<div class="row alt" style="top:145px;height:21px;line-height:19.4px"><span style="left:4.2px">Production</span><div class="cb" style="left:291px;top:3.2px;width:15.4px;height:15px"></div></div>
<div class="row" style="top:166px;height:21px;line-height:19.4px"><span style="left:4.2px">Purchaser</span><div class="cb" style="left:291px;top:3.2px;width:15.4px;height:15px"></div></div>
<div class="row alt" style="top:187px;height:21px;line-height:19.4px"><span style="left:4.2px">Role 2206</span><div class="cb" style="left:291px;top:3.2px;width:15.4px;height:15px"></div></div>
<div class="row" style="top:208px;height:21px;line-height:19.4px"><span style="left:4.2px">Sales</span><div class="cb" style="left:291px;top:3.2px;width:15.4px;height:15px"></div></div>
<div class="row alt" style="top:229px;height:21px;line-height:19.4px"><span style="left:4.2px">Standard User</span><div class="cb" style="left:291px;top:3.2px;width:15.4px;height:15px"></div></div>
<div class="row" style="top:250px;height:21px;line-height:19.4px"><span style="left:4.2px">Super Admin</span><div class="cb" style="left:291px;top:3.2px;width:15.4px;height:15px"></div></div>
<div class="row alt" style="top:271px;height:21px;line-height:19.4px"><span style="left:4.2px">System Admin</span><div class="cb" style="left:291px;top:3.2px;width:15.4px;height:15px"></div></div>
<div class="row" style="top:292px;height:1px"></div>
</div><div class="ph" style="height:22.4px;line-height:23.0px">List of role &amp; modules</div></div>
<div class="abs panel" style="left:932px;top:66px;width:738px;height:421px"><div class="pb">
<div class="row b" style="top:21px;height:21px;line-height:21px;border-top:none"><span style="left:4.5px">Page</span><span style="left:179.5px">Name</span><span style="left:341px">Description</span><span style="left:626.3px;top:0.7px">All / Disable all</span><div class="cb" style="left:701.2px;top:2.2px"></div></div>
<div class="row" style="top:41.30px;height:21.875px;line-height:20.4px"><span style="left:4.5px">entry</span><span style="left:179.5px">Add</span><span style="left:642px">Not set</span><svg class="dn" style="left:714.2px;top:7.6px" viewBox="0 0 9 6"><path d="M0.6 0.8 L4.5 4.9 L8.4 0.8" fill="none" stroke="#707070" stroke-width="1.1" stroke-linecap="round" stroke-linejoin="round"/></svg></div>
<div class="row alt" style="top:63.17px;height:21.875px;line-height:20.4px"><span style="left:4.5px">entry</span><span style="left:179.5px">Delete</span><span style="left:642px">Not set</span><svg class="dn" style="left:714.2px;top:7.6px" viewBox="0 0 9 6"><path d="M0.6 0.8 L4.5 4.9 L8.4 0.8" fill="none" stroke="#707070" stroke-width="1.1" stroke-linecap="round" stroke-linejoin="round"/></svg></div>
<div class="row" style="top:85.05px;height:21.875px;line-height:20.4px"><span style="left:4.5px">entry</span><span style="left:179.5px">View</span><span style="left:642px">Not set</span><svg class="dn" style="left:714.2px;top:7.6px" viewBox="0 0 9 6"><path d="M0.6 0.8 L4.5 4.9 L8.4 0.8" fill="none" stroke="#707070" stroke-width="1.1" stroke-linecap="round" stroke-linejoin="round"/></svg></div>
<div class="row alt" style="top:106.92px;height:21.875px;line-height:20.4px"><span style="left:4.5px">entry</span><span style="left:179.5px">Edit</span><span style="left:642px">Not set</span><svg class="dn" style="left:714.2px;top:7.6px" viewBox="0 0 9 6"><path d="M0.6 0.8 L4.5 4.9 L8.4 0.8" fill="none" stroke="#707070" stroke-width="1.1" stroke-linecap="round" stroke-linejoin="round"/></svg></div>
<div class="row" style="top:128.80px;height:21.875px;line-height:20.4px"><span style="left:4.5px">options</span><span style="left:179.5px">Export</span><span style="left:642px">Not set</span><svg class="dn" style="left:714.2px;top:7.6px" viewBox="0 0 9 6"><path d="M0.6 0.8 L4.5 4.9 L8.4 0.8" fill="none" stroke="#707070" stroke-width="1.1" stroke-linecap="round" stroke-linejoin="round"/></svg></div>
<div class="row" style="top:150.68px;height:1px"></div>
</div><div class="ph" style="height:22.4px;line-height:23.0px">Modules: products</div></div>
<div class="abs panel" style="left:558px;top:499px;width:364px;height:422px"><div class="pb">
<div class="row b" style="top:22px;height:20px;line-height:20px;border-top:none;right:14px"><span style="left:0;width:350px;text-align:center">Module</span></div>
<div class="row" style="top:41.30px;height:21.1px;line-height:19.4px;right:14px"><span style="left:4.2px">Batche</span><svg class="chev" style="left:276.5px;top:5.5px" viewBox="0 0 5 8"><path d="M1 0.8 L4 4 L1 7.2" fill="none" stroke="#6781de" stroke-width="1.45" stroke-linecap="round" stroke-linejoin="round"/></svg></div>
<div class="row alt" style="top:62.30px;height:21.1px;line-height:19.4px;right:14px"><span style="left:4.2px">Calendar</span><svg class="chev" style="left:276.5px;top:5.5px" viewBox="0 0 5 8"><path d="M1 0.8 L4 4 L1 7.2" fill="none" stroke="#6781de" stroke-width="1.45" stroke-linecap="round" stroke-linejoin="round"/></svg></div>
<div class="row" style="top:83.30px;height:21.1px;line-height:19.4px;right:14px"><span style="left:4.2px">Communication</span><svg class="chev" style="left:276.5px;top:5.5px" viewBox="0 0 5 8"><path d="M1 0.8 L4 4 L1 7.2" fill="none" stroke="#6781de" stroke-width="1.45" stroke-linecap="round" stroke-linejoin="round"/></svg></div>
<div class="row alt" style="top:104.30px;height:21.1px;line-height:19.4px;right:14px"><span style="left:4.2px">Company</span><svg class="chev" style="left:276.5px;top:5.5px" viewBox="0 0 5 8"><path d="M1 0.8 L4 4 L1 7.2" fill="none" stroke="#6781de" stroke-width="1.45" stroke-linecap="round" stroke-linejoin="round"/></svg></div>
<div class="row" style="top:125.30px;height:21.1px;line-height:19.4px;right:14px"><span style="left:4.2px">Contact</span><svg class="chev" style="left:276.5px;top:5.5px" viewBox="0 0 5 8"><path d="M1 0.8 L4 4 L1 7.2" fill="none" stroke="#6781de" stroke-width="1.45" stroke-linecap="round" stroke-linejoin="round"/></svg></div>
<div class="row alt" style="top:146.30px;height:21.1px;line-height:19.4px;right:14px"><span style="left:4.2px">Dashboard</span><svg class="chev" style="left:276.5px;top:5.5px" viewBox="0 0 5 8"><path d="M1 0.8 L4 4 L1 7.2" fill="none" stroke="#6781de" stroke-width="1.45" stroke-linecap="round" stroke-linejoin="round"/></svg></div>
<div class="row" style="top:167.30px;height:21.1px;line-height:19.4px;right:14px"><span style="left:4.2px">Doc</span><svg class="chev" style="left:276.5px;top:5.5px" viewBox="0 0 5 8"><path d="M1 0.8 L4 4 L1 7.2" fill="none" stroke="#6781de" stroke-width="1.45" stroke-linecap="round" stroke-linejoin="round"/></svg></div>
<div class="row alt" style="top:188.30px;height:21.1px;line-height:19.4px;right:14px"><span style="left:4.2px">Email Template</span><svg class="chev" style="left:276.5px;top:5.5px" viewBox="0 0 5 8"><path d="M1 0.8 L4 4 L1 7.2" fill="none" stroke="#6781de" stroke-width="1.45" stroke-linecap="round" stroke-linejoin="round"/></svg></div>
<div class="row" style="top:209.30px;height:21.1px;line-height:19.4px;right:14px"><span style="left:4.2px">Enquiry</span><svg class="chev" style="left:276.5px;top:5.5px" viewBox="0 0 5 8"><path d="M1 0.8 L4 4 L1 7.2" fill="none" stroke="#6781de" stroke-width="1.45" stroke-linecap="round" stroke-linejoin="round"/></svg></div>
<div class="row alt" style="top:230.30px;height:21.1px;line-height:19.4px;right:14px"><span style="left:4.2px">Job</span><svg class="chev" style="left:276.5px;top:5.5px" viewBox="0 0 5 8"><path d="M1 0.8 L4 4 L1 7.2" fill="none" stroke="#6781de" stroke-width="1.45" stroke-linecap="round" stroke-linejoin="round"/></svg></div>
<div class="row" style="top:251.30px;height:21.1px;line-height:19.4px;right:14px"><span style="left:4.2px">Location</span><svg class="chev" style="left:276.5px;top:5.5px" viewBox="0 0 5 8"><path d="M1 0.8 L4 4 L1 7.2" fill="none" stroke="#6781de" stroke-width="1.45" stroke-linecap="round" stroke-linejoin="round"/></svg></div>
<div class="row sel" style="top:272.30px;height:21.1px;line-height:19.4px;right:14px"><span style="left:4.2px">Product</span><svg class="chev" style="left:276.5px;top:5.5px" viewBox="0 0 5 8"><path d="M1 0.8 L4 4 L1 7.2" fill="none" stroke="#6781de" stroke-width="1.45" stroke-linecap="round" stroke-linejoin="round"/></svg></div>
<div class="row" style="top:293.30px;height:21.1px;line-height:19.4px;right:14px"><span style="left:4.2px">Purchase Order</span><svg class="chev" style="left:276.5px;top:5.5px" viewBox="0 0 5 8"><path d="M1 0.8 L4 4 L1 7.2" fill="none" stroke="#6781de" stroke-width="1.45" stroke-linecap="round" stroke-linejoin="round"/></svg></div>
<div class="row alt" style="top:314.30px;height:21.1px;line-height:19.4px;right:14px"><span style="left:4.2px">Quotation</span><svg class="chev" style="left:276.5px;top:5.5px" viewBox="0 0 5 8"><path d="M1 0.8 L4 4 L1 7.2" fill="none" stroke="#6781de" stroke-width="1.45" stroke-linecap="round" stroke-linejoin="round"/></svg></div>
<div class="row" style="top:335.30px;height:21.1px;line-height:19.4px;right:14px"><span style="left:4.2px">Receipt</span><svg class="chev" style="left:276.5px;top:5.5px" viewBox="0 0 5 8"><path d="M1 0.8 L4 4 L1 7.2" fill="none" stroke="#6781de" stroke-width="1.45" stroke-linecap="round" stroke-linejoin="round"/></svg></div>
<div class="row alt" style="top:356.30px;height:21.1px;line-height:19.4px;right:14px"><span style="left:4.2px">Sales Account</span><svg class="chev" style="left:276.5px;top:5.5px" viewBox="0 0 5 8"><path d="M1 0.8 L4 4 L1 7.2" fill="none" stroke="#6781de" stroke-width="1.45" stroke-linecap="round" stroke-linejoin="round"/></svg></div>
<div class="row" style="top:377.30px;height:21.1px;line-height:19.4px;right:14px"><span style="left:4.2px">Sales Invoice</span><svg class="chev" style="left:276.5px;top:5.5px" viewBox="0 0 5 8"><path d="M1 0.8 L4 4 L1 7.2" fill="none" stroke="#6781de" stroke-width="1.45" stroke-linecap="round" stroke-linejoin="round"/></svg></div>
<div class="row alt" style="top:398.30px;height:21.1px;line-height:19.4px;right:14px"><span style="left:4.2px">Sales Order</span><svg class="chev" style="left:276.5px;top:5.5px" viewBox="0 0 5 8"><path d="M1 0.8 L4 4 L1 7.2" fill="none" stroke="#6781de" stroke-width="1.45" stroke-linecap="round" stroke-linejoin="round"/></svg></div>
<div class="sbt" style="left:350px;top:22px;width:14px;height:400px"></div>
<div class="aup" style="left:351.6px;top:26.5px"></div>
<div class="thumb" style="left:351.9px;top:37.5px;height:291px"></div>
<div class="adn" style="left:351.6px;top:410.5px"></div>
</div><div class="ph" style="height:23px;line-height:23.6px">Specify additional permissions</div></div>
<div class="abs panel" style="left:932px;top:499px;width:738px;height:422px"><div class="pb">
<div class="row b" style="top:22px;height:21px;line-height:20.4px;border-top:none;right:14px"><span style="left:4.5px">Option name</span><span style="left:612.9px;top:1.5px">All / Disable all</span><div class="cb" style="left:687.5px;top:2.2px"></div></div>
<div class="row" style="top:42.20px;height:21.875px;line-height:20.4px;right:14px"><span style="left:4.5px">Existing</span><span style="left:629px">Not set</span><svg class="dn" style="left:700px;top:8.0px" viewBox="0 0 9 6"><path d="M0.6 0.8 L4.5 4.9 L8.4 0.8" fill="none" stroke="#707070" stroke-width="1.1" stroke-linecap="round" stroke-linejoin="round"/></svg></div>
<div class="row alt" style="top:64.08px;height:21.875px;line-height:20.4px;right:14px"><span style="left:4.5px">Under</span><span style="left:629px">Not set</span><svg class="dn" style="left:700px;top:8.0px" viewBox="0 0 9 6"><path d="M0.6 0.8 L4.5 4.9 L8.4 0.8" fill="none" stroke="#707070" stroke-width="1.1" stroke-linecap="round" stroke-linejoin="round"/></svg></div>
<div class="row" style="top:85.95px;height:21.875px;line-height:20.4px;right:14px"><span style="left:4.5px">Over</span><span style="left:629px">Not set</span><svg class="dn" style="left:700px;top:8.0px" viewBox="0 0 9 6"><path d="M0.6 0.8 L4.5 4.9 L8.4 0.8" fill="none" stroke="#707070" stroke-width="1.1" stroke-linecap="round" stroke-linejoin="round"/></svg></div>
<div class="row alt" style="top:107.83px;height:21.875px;line-height:20.4px;right:14px"><span style="left:4.5px">Under</span><span style="left:629px">Not set</span><svg class="dn" style="left:700px;top:8.0px" viewBox="0 0 9 6"><path d="M0.6 0.8 L4.5 4.9 L8.4 0.8" fill="none" stroke="#707070" stroke-width="1.1" stroke-linecap="round" stroke-linejoin="round"/></svg></div>
<div class="row" style="top:129.70px;height:21.875px;line-height:20.4px;right:14px"><span style="left:4.5px">Finished products</span><span style="left:629px">Not set</span><svg class="dn" style="left:700px;top:8.0px" viewBox="0 0 9 6"><path d="M0.6 0.8 L4.5 4.9 L8.4 0.8" fill="none" stroke="#707070" stroke-width="1.1" stroke-linecap="round" stroke-linejoin="round"/></svg></div>
<div class="row alt" style="top:151.57px;height:21.875px;line-height:20.4px;right:14px"><span style="left:4.5px">Sub assembly items</span><span style="left:629px">Not set</span><svg class="dn" style="left:700px;top:8.0px" viewBox="0 0 9 6"><path d="M0.6 0.8 L4.5 4.9 L8.4 0.8" fill="none" stroke="#707070" stroke-width="1.1" stroke-linecap="round" stroke-linejoin="round"/></svg></div>
<div class="row" style="top:173.45px;height:21.875px;line-height:20.4px;right:14px"><span style="left:4.5px">Items used in assembly</span><span style="left:629px">Not set</span><svg class="dn" style="left:700px;top:8.0px" viewBox="0 0 9 6"><path d="M0.6 0.8 L4.5 4.9 L8.4 0.8" fill="none" stroke="#707070" stroke-width="1.1" stroke-linecap="round" stroke-linejoin="round"/></svg></div>
<div class="row alt" style="top:195.32px;height:21.875px;line-height:20.4px;right:14px"><span style="left:4.5px">Current</span><span style="left:629px">Not set</span><svg class="dn" style="left:700px;top:8.0px" viewBox="0 0 9 6"><path d="M0.6 0.8 L4.5 4.9 L8.4 0.8" fill="none" stroke="#707070" stroke-width="1.1" stroke-linecap="round" stroke-linejoin="round"/></svg></div>
<div class="row" style="top:217.20px;height:21.875px;line-height:20.4px;right:14px"><span style="left:4.5px">Flagged as old</span><span style="left:629px">Not set</span><svg class="dn" style="left:700px;top:8.0px" viewBox="0 0 9 6"><path d="M0.6 0.8 L4.5 4.9 L8.4 0.8" fill="none" stroke="#707070" stroke-width="1.1" stroke-linecap="round" stroke-linejoin="round"/></svg></div>
<div class="row alt" style="top:239.07px;height:21.875px;line-height:20.4px;right:14px"><span style="left:4.5px">On sales orders</span><span style="left:629px">Not set</span><svg class="dn" style="left:700px;top:8.0px" viewBox="0 0 9 6"><path d="M0.6 0.8 L4.5 4.9 L8.4 0.8" fill="none" stroke="#707070" stroke-width="1.1" stroke-linecap="round" stroke-linejoin="round"/></svg></div>
<div class="row" style="top:260.95px;height:21.875px;line-height:20.4px;right:14px"><span style="left:4.5px">Low stock (based on minimum stock quantity required)</span><span style="left:629px">Not set</span><svg class="dn" style="left:700px;top:8.0px" viewBox="0 0 9 6"><path d="M0.6 0.8 L4.5 4.9 L8.4 0.8" fill="none" stroke="#707070" stroke-width="1.1" stroke-linecap="round" stroke-linejoin="round"/></svg></div>
<div class="row alt" style="top:282.82px;height:21.875px;line-height:20.4px;right:14px"><span style="left:4.5px">Tracking stock</span><span style="left:629px">Not set</span><svg class="dn" style="left:700px;top:8.0px" viewBox="0 0 9 6"><path d="M0.6 0.8 L4.5 4.9 L8.4 0.8" fill="none" stroke="#707070" stroke-width="1.1" stroke-linecap="round" stroke-linejoin="round"/></svg></div>
<div class="row" style="top:304.70px;height:21.875px;line-height:20.4px;right:14px"><span style="left:4.5px">Find records with stock quantities out of sync</span><span style="left:629px">Not set</span><svg class="dn" style="left:700px;top:8.0px" viewBox="0 0 9 6"><path d="M0.6 0.8 L4.5 4.9 L8.4 0.8" fill="none" stroke="#707070" stroke-width="1.1" stroke-linecap="round" stroke-linejoin="round"/></svg></div>
<div class="row alt" style="top:326.57px;height:21.875px;line-height:20.4px;right:14px"><span style="left:4.5px">Sync stock quantities for current record (compares with live data)</span><span style="left:629px">Not set</span><svg class="dn" style="left:700px;top:8.0px" viewBox="0 0 9 6"><path d="M0.6 0.8 L4.5 4.9 L8.4 0.8" fill="none" stroke="#707070" stroke-width="1.1" stroke-linecap="round" stroke-linejoin="round"/></svg></div>
<div class="row" style="top:348.45px;height:21.875px;line-height:20.4px;right:14px"><span style="left:4.5px">Sync stock quantities for found set of records (compares with live data)</span><span style="left:629px">Not set</span><svg class="dn" style="left:700px;top:8.0px" viewBox="0 0 9 6"><path d="M0.6 0.8 L4.5 4.9 L8.4 0.8" fill="none" stroke="#707070" stroke-width="1.1" stroke-linecap="round" stroke-linejoin="round"/></svg></div>
<div class="row alt" style="top:370.32px;height:21.875px;line-height:20.4px;right:14px"><span style="left:4.5px">Re-create product location portal records for the current record</span><span style="left:629px">Not set</span><svg class="dn" style="left:700px;top:8.0px" viewBox="0 0 9 6"><path d="M0.6 0.8 L4.5 4.9 L8.4 0.8" fill="none" stroke="#707070" stroke-width="1.1" stroke-linecap="round" stroke-linejoin="round"/></svg></div>
<div class="row" style="top:392.20px;height:21.875px;line-height:20.4px;right:14px"><span style="left:4.5px">Re-create product location portal records for the found set of records</span><span style="left:629px">Not set</span><svg class="dn" style="left:700px;top:8.0px" viewBox="0 0 9 6"><path d="M0.6 0.8 L4.5 4.9 L8.4 0.8" fill="none" stroke="#707070" stroke-width="1.1" stroke-linecap="round" stroke-linejoin="round"/></svg></div>
<div class="row alt" style="top:414.07px;height:21.875px;line-height:20.4px;right:14px"></div>
<div class="sbt" style="left:723.5px;top:22px;width:14px;height:400px"></div>
<div class="aup" style="left:726.2px;top:26.5px"></div>
<div class="thumb" style="left:726.5px;top:37.5px;height:203px"></div>
<div class="adn" style="left:726.2px;top:410.5px"></div>
</div><div class="ph" style="height:23px;line-height:23.6px">Option</div></div>
<div id="status" class="abs">
<span style="left:14.5px" class="b">Created:</span>
<span style="left:56.5px">9 Jan, 2026</span>
<span style="left:116.5px">12:04</span>
<span style="left:150.5px" class="b">By:</span>
<span style="left:168.5px">admin@vicdigitalworks.com</span>
<span style="left:301.5px" class="b">Updated:</span>
<span style="left:346px">19 Mar, 2026</span>
<span style="left:412px">14:19</span>
<span style="left:446px" class="b">By:</span>
<span style="left:464px">admin@vicdigitalworks.com</span>
<span style="left:1450.7px">Dashboard</span>
<span style="left:1518px">Calendar</span>
<span style="left:1577.5px">Alert</span>
<span style="left:1621.7px">Demo User</span>
<div class="sep" style="left:1508px"></div>
<div class="sep" style="left:1566.5px"></div>
<div class="sep" style="left:1611.2px"></div>
</div>
<div id="obox" class="abs"></div>
<svg class="abs" style="left:540px;top:120px;width:230px;height:170px" viewBox="540 120 230 170"><g fill="none" stroke="#f7941d" stroke-width="12" stroke-linecap="round" stroke-linejoin="round"><path d="M727 150 C 708 209 659 239 570.5 231.3"/><path d="M600 198.6 L569.8 231.3 L600.5 261"/></g></svg>
</body></html>
